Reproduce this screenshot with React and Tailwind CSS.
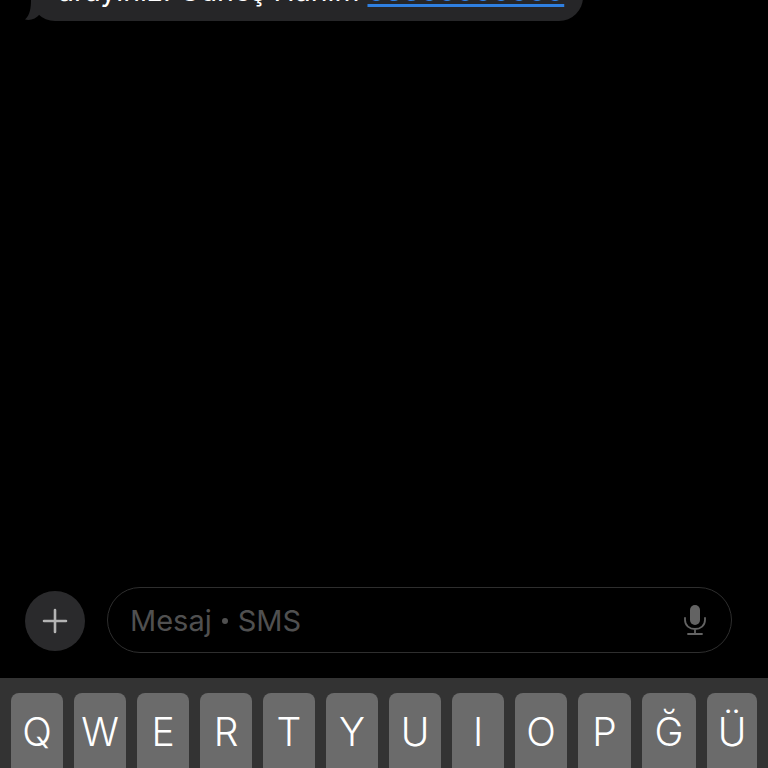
const keys = [
    { label: "Q", w: "w-[52px]" },
    { label: "W", w: "w-[52px]" },
    { label: "E", w: "w-[52px]" },
    { label: "R", w: "w-[52px]" },
    { label: "T", w: "w-[52px]" },
    { label: "Y", w: "w-[52px]" },
    { label: "U", w: "w-[52px]" },
    { label: "I", w: "w-[52px]" },
    { label: "O", w: "w-[52px]" },
    { label: "P", w: "w-[53px]" },
    { label: "Ğ", w: "w-[54px]" },
    { label: "Ü", w: "w-[50px]" },
];

export default function App() {
    return (
        <main className="flex h-[768px] w-[768px] flex-col overflow-hidden bg-black font-['Inter','Liberation_Sans',sans-serif]">
            <div className="relative ml-[31px] mt-[-24px] flex h-[45px] w-[552px] shrink-0 items-start rounded-b-[24px] bg-[#262628] pl-[27px]">
                <svg className="absolute bottom-0 left-[-7px]" width="20" height="21" viewBox="0 0 20 21">
                    <path d="M7 0C7 8 6 15 1 19.500C6 21 12 19 16 14L16 0Z" fill="#262628" />
                </svg>
                <p className="relative mt-[-3px] whitespace-nowrap text-[28.500px] leading-[36px] text-white">
                    arayınız. Güneş Hanım{" "}
                    <span className="text-[#2f7fe0] underline decoration-[2.500px] underline-offset-[3px]">05300000000</span>
                </p>
            </div>

            <div className="flex-1" />

            <div className="flex h-[66px] shrink-0 items-center pl-[25px] pr-[36px]">
                <div className="mt-[2px] flex h-[60px] w-[60px] shrink-0 items-center justify-center rounded-full bg-[#2a2a2c]">
                    <svg width="26" height="26" viewBox="0 0 26 26" fill="none" stroke="#b4b4b4" strokeWidth="2.600" strokeLinecap="round">
                        <path d="M13 2v22M2 13h22" />
                    </svg>
                </div>
                <div className="ml-[22px] flex h-[66px] flex-1 items-center justify-between rounded-full border-[1.500px] border-[#2e2e2e] pl-[22px] pr-[25px]">
                    <span className="mt-[2px] flex items-center gap-[10px] whitespace-nowrap text-[29px] text-[#505050]">
                        Mesaj
                        <span className="h-[6px] w-[6px] rounded-full bg-[#505050]" />
                        SMS
                    </span>
                    <svg width="22" height="30" viewBox="0 0 22 30" fill="none">
                        <rect x="6" y="0" width="10" height="20" rx="5" fill="#636363" />
                        <path d="M1 13v2c0 5.500 4.500 9 10 9s10-3.500 10-9v-2M11 24v4M4 29h14" stroke="#636363" strokeWidth="1.800" strokeLinecap="round" />
                    </svg>
                </div>
            </div>

            <div className="mt-[25px] flex h-[90px] shrink-0 items-start gap-[11px] bg-[#333333] pl-[11px] pt-[15px]">
                {keys.map((k) => (
                    <div key={k.label} className={`${k.w} flex h-[90px] shrink-0 justify-center rounded-[8px] bg-[#6b6b6b] pt-[16px] text-[39px] font-light leading-[46px] text-white`}>
                        {k.label}
                    </div>
                ))}
            </div>
        </main>
    );
}
